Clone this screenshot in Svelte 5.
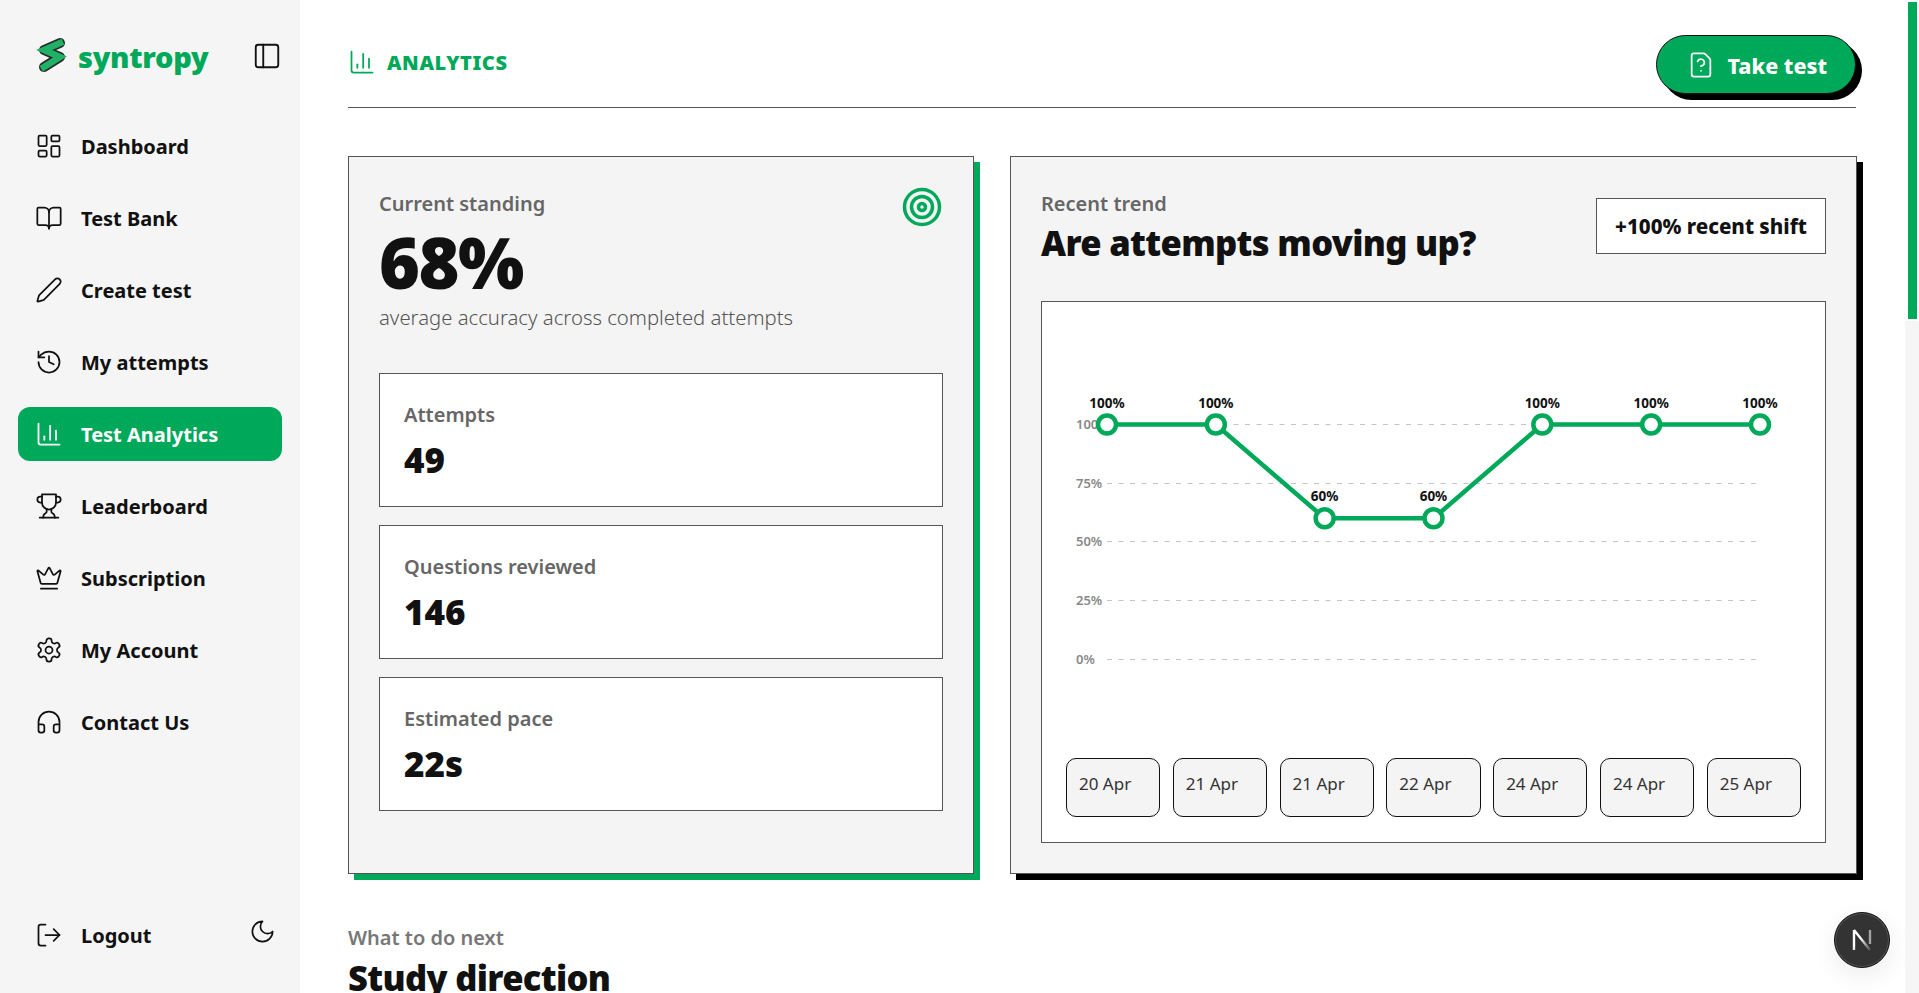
<script>
    const nav = [
        { label: 'Dashboard', icon: 'dashboard' },
        { label: 'Test Bank', icon: 'book' },
        { label: 'Create test', icon: 'pen' },
        { label: 'My attempts', icon: 'history' },
        { label: 'Test Analytics', icon: 'chart', active: true },
        { label: 'Leaderboard', icon: 'trophy' },
        { label: 'Subscription', icon: 'crown' },
        { label: 'My Account', icon: 'settings' },
        { label: 'Contact Us', icon: 'headphones' }
    ];

    const stats = [
        { label: 'Attempts', value: '49' },
        { label: 'Questions reviewed', value: '146' },
        { label: 'Estimated pace', value: '22s' }
    ];

    const dates = ['20 Apr', '21 Apr', '21 Apr', '22 Apr', '24 Apr', '24 Apr', '25 Apr'];
    const scores = [100, 100, 60, 60, 100, 100, 100];
    const ticks = [100, 75, 50, 25, 0];

    // chart coordinates, relative to the white chart box
    const xAt = i => 65 + i * 108.83;
    const yAt = v => 357 - v * 2.345;
    const points = scores.map((s, i) => `${xAt(i)},${yAt(s)}`).join(' ');
</script>

{#snippet icon(name, size = 28)}
    <svg class="icon" width={size} height={size} viewBox="0 0 24 24">
        {#if name === 'dashboard'}
            <rect x="3" y="3" width="7" height="9" rx="1" />
            <rect x="14" y="3" width="7" height="5" rx="1" />
            <rect x="14" y="12" width="7" height="9" rx="1" />
            <rect x="3" y="16" width="7" height="5" rx="1" />
        {:else if name === 'book'}
            <path d="M12 7v14" />
            <path d="M3 18a1 1 0 0 1-1-1V4a1 1 0 0 1 1-1h5a4 4 0 0 1 4 4 4 4 0 0 1 4-4h5a1 1 0 0 1 1 1v13a1 1 0 0 1-1 1h-6a3 3 0 0 0-3 3 3 3 0 0 0-3-3z" />
        {:else if name === 'pen'}
            <path d="M21.174 6.812a1 1 0 0 0-3.986-3.987L3.842 16.174a2 2 0 0 0-.5.83l-1.321 4.352a.5.5 0 0 0 .623.622l4.353-1.32a2 2 0 0 0 .83-.497z" />
        {:else if name === 'history'}
            <path d="M3 12a9 9 0 1 0 9-9 9.75 9.75 0 0 0-6.74 2.74L3 8" />
            <path d="M3 3v5h5" />
            <path d="M12 7v5l4 2" />
        {:else if name === 'chart'}
            <path d="M3 3v16a2 2 0 0 0 2 2h16" />
            <path d="M18 17V9" />
            <path d="M13 17V5" />
            <path d="M8 17v-3" />
        {:else if name === 'trophy'}
            <path d="M6 9H4.5a2.5 2.5 0 0 1 0-5H6" />
            <path d="M18 9h1.5a2.5 2.5 0 0 0 0-5H18" />
            <path d="M4 22h16" />
            <path d="M10 14.66V17c0 .55-.47.98-.97 1.21C7.85 18.75 7 20.24 7 22" />
            <path d="M14 14.66V17c0 .55.47.98.97 1.21C16.15 18.75 17 20.24 17 22" />
            <path d="M18 2H6v7a6 6 0 0 0 12 0V2Z" />
        {:else if name === 'crown'}
            <path d="M11.562 3.266a.5.5 0 0 1 .876 0L15.39 8.87a1 1 0 0 0 1.516.294L21.183 5.5a.5.5 0 0 1 .798.519l-2.834 10.246a1 1 0 0 1-.956.734H5.81a1 1 0 0 1-.957-.734L2.02 6.02a.5.5 0 0 1 .798-.519l4.276 3.664a1 1 0 0 0 1.516-.294z" />
            <path d="M5 21h14" />
        {:else if name === 'settings'}
            <path d="M12.22 2h-.44a2 2 0 0 0-2 2v.18a2 2 0 0 1-1 1.73l-.43.25a2 2 0 0 1-2 0l-.15-.08a2 2 0 0 0-2.73.73l-.22.38a2 2 0 0 0 .73 2.73l.15.1a2 2 0 0 1 1 1.72v.51a2 2 0 0 1-1 1.74l-.15.09a2 2 0 0 0-.73 2.73l.22.38a2 2 0 0 0 2.73.73l.15-.08a2 2 0 0 1 2 0l.43.25a2 2 0 0 1 1 1.73V20a2 2 0 0 0 2 2h.44a2 2 0 0 0 2-2v-.18a2 2 0 0 1 1-1.73l.43-.25a2 2 0 0 1 2 0l.15.08a2 2 0 0 0 2.73-.73l.22-.39a2 2 0 0 0-.73-2.73l-.15-.08a2 2 0 0 1-1-1.74v-.5a2 2 0 0 1 1-1.74l.15-.09a2 2 0 0 0 .73-2.73l-.22-.38a2 2 0 0 0-2.73-.73l-.15.08a2 2 0 0 1-2 0l-.43-.25a2 2 0 0 1-1-1.73V4a2 2 0 0 0-2-2z" />
            <circle cx="12" cy="12" r="3" />
        {:else if name === 'headphones'}
            <path d="M3 14h3a2 2 0 0 1 2 2v3a2 2 0 0 1-2 2H5a2 2 0 0 1-2-2v-7a9 9 0 0 1 18 0v7a2 2 0 0 1-2 2h-1a2 2 0 0 1-2-2v-3a2 2 0 0 1 2-2h3" />
        {:else if name === 'logout'}
            <path d="M9 21H5a2 2 0 0 1-2-2V5a2 2 0 0 1 2-2h4" />
            <path d="m16 17 5-5-5-5" />
            <path d="M21 12H9" />
        {:else if name === 'moon'}
            <path d="M12 3a6 6 0 0 0 9 9 9 9 0 1 1-9-9Z" />
        {:else if name === 'panel'}
            <rect x="3" y="3" width="18" height="18" rx="2" />
            <path d="M9 3v18" />
        {:else if name === 'file'}
            <path d="M6 22a2 2 0 0 1-2-2V4a2 2 0 0 1 2-2h8a2.4 2.4 0 0 1 1.704.706l3.588 3.588A2.4 2.4 0 0 1 20 8v12a2 2 0 0 1-2 2z" />
            <path d="M12 17h.01" />
            <path d="M9.1 9a3 3 0 0 1 5.82 1c0 2-3 3-3 3" />
        {:else if name === 'target'}
            <circle cx="12" cy="12" r="10" />
            <circle cx="12" cy="12" r="6" />
            <circle cx="12" cy="12" r="2" />
        {/if}
    </svg>
{/snippet}

<div class="page">
    <aside class="sidebar">
        <div class="brand">
            <svg class="logo" width="36" height="40" viewBox="0 0 36 40">
                <polyline class="logo-edge" points="24,7 8,14 24,21 8,31" />
                <polyline class="logo-fill" points="24,7 8,14 24,21 8,31" />
            </svg>
            <span class="brand-name">syntropy</span>
            <span class="panel-toggle">{@render icon('panel', 30)}</span>
        </div>

        <nav>
            {#each nav as item}
                <a class="nav-item" class:active={item.active}>
                    {@render icon(item.icon)}
                    <span>{item.label}</span>
                </a>
            {/each}
        </nav>

        <div class="side-foot">
            <a class="nav-item">
                {@render icon('logout')}
                <span>Logout</span>
            </a>
            <span class="moon">{@render icon('moon', 27)}</span>
        </div>
    </aside>

    <main>
        <header>
            <div class="crumb">
                {@render icon('chart')}
                <span>ANALYTICS</span>
            </div>
            <button class="take-test">
                {@render icon('file')}
                <span>Take test</span>
            </button>
        </header>

        <section class="cards">
            <article class="card standing">
                <p class="eyebrow">Current standing</p>
                <span class="target">{@render icon('target', 42)}</span>
                <div class="big">68%</div>
                <p class="sub">average accuracy across completed attempts</p>
                <div class="stats">
                    {#each stats as stat}
                        <div class="stat">
                            <p class="eyebrow">{stat.label}</p>
                            <div class="value">{stat.value}</div>
                        </div>
                    {/each}
                </div>
            </article>

            <article class="card trend">
                <div class="trend-head">
                    <div>
                        <p class="eyebrow">Recent trend</p>
                        <h2>Are attempts moving up?</h2>
                    </div>
                    <div class="shift">+100% recent shift</div>
                </div>

                <div class="chart">
                    <svg width="783" height="456" viewBox="0 0 783 456">
                        {#each ticks as t}
                            <line class="grid" x1="65" x2="714" y1={Math.floor(yAt(t)) + 0.5} y2={Math.floor(yAt(t)) + 0.5} />
                            <text class="tick" x="34" y={yAt(t) + 4.5}>{t}%</text>
                        {/each}
                        <polyline class="trend-line" {points} />
                        {#each scores as s, i}
                            <circle class="dot" cx={xAt(i)} cy={yAt(s)} r="9" />
                            <text class="score" x={xAt(i)} y={yAt(s) - 17}>{s}%</text>
                        {/each}
                    </svg>
                    <div class="dates">
                        {#each dates as d}
                            <div class="date">{d}</div>
                        {/each}
                    </div>
                </div>
            </article>
        </section>

        <section class="next">
            <p class="eyebrow">What to do next</p>
            <h2>Study direction</h2>
        </section>
    </main>

    <div class="scroll-track"><div class="scroll-thumb"></div></div>

    <div class="dev-badge">
        <svg width="28" height="28" viewBox="0 0 28 28">
            <defs>
                <linearGradient id="nfade" x1="0" y1="0" x2="1" y2="1">
                    <stop offset="0.4" stop-color="#fff" />
                    <stop offset="1" stop-color="#fff" stop-opacity="0.15" />
                </linearGradient>
            </defs>
            <path d="M6 4v20M6 4l16 20" fill="none" stroke="url(#nfade)" stroke-width="2.4" />
            <path d="M22 4v14" fill="none" stroke="#fff" stroke-opacity="0.55" stroke-width="2.4" />
        </svg>
    </div>
</div>

<style>
    :global(body) {
        background: #fff;
        overflow: hidden;
    }

    .page {
        display: flex;
        height: 993px;
        overflow: hidden;
        font-family: "Noto Sans", "Open Sans", sans-serif;
        color: #111;
    }

    p, h2 { margin: 0; }

    .icon {
        fill: none;
        stroke: currentColor;
        stroke-width: 1.5;
        stroke-linecap: round;
        stroke-linejoin: round;
        flex: none;
        display: block;
    }

    /* sidebar */
    .sidebar {
        width: 300px;
        flex: none;
        background: #f5f5f5;
        padding: 0 18px;
        box-sizing: border-box;
        display: flex;
        flex-direction: column;
    }

    .brand {
        display: flex;
        align-items: center;
        height: 112px;
        margin-bottom: 7px;
        padding-left: 18px;
    }

    .logo-edge, .logo-fill {
        fill: none;
    }
    .logo-edge { stroke: #2a2a2a; stroke-width: 10; stroke-linecap: round; stroke-linejoin: round; }
    .logo-fill { stroke: #1fb165; stroke-width: 6.5; stroke-linecap: square; stroke-linejoin: miter; }

    .brand-name {
        font-size: 29px;
        font-weight: 900;
        color: #00a859;
        margin-left: 6px;
        letter-spacing: -0.3px;
    }

    .panel-toggle {
        margin-left: auto;
    }

    nav {
        display: flex;
        flex-direction: column;
        gap: 18px;
    }

    .nav-item {
        display: flex;
        align-items: center;
        gap: 18.5px;
        height: 54px;
        padding-left: 16.5px;
        border-radius: 12px;
        font-size: 20px;
        font-weight: 700;
        color: #111;
    }

    .nav-item span { margin-top: 1px; }

    .nav-item.active {
        background: #00a859;
        color: #fff;
    }

    .side-foot {
        margin-top: auto;
        margin-bottom: 31px;
        display: flex;
        align-items: center;
        justify-content: space-between;
    }

    .moon { margin-right: 6px; margin-top: -7px; }

    /* main column */
    main {
        flex: 1;
        padding: 35px 63px 0 48px;
        min-width: 0;
    }

    header {
        display: flex;
        align-items: flex-start;
        justify-content: space-between;
        height: 72px;
        border-bottom: 1px solid #555;
    }

    .crumb {
        display: flex;
        align-items: center;
        gap: 11px;
        color: #00a859;
        font-size: 20px;
        font-weight: 900;
        letter-spacing: 0.6px;
        margin-top: 13px;
    }

    .take-test {
        display: flex;
        align-items: center;
        gap: 13px;
        height: 59px;
        padding: 0 28px 0 30px;
        border: 1px solid #111;
        border-radius: 30px;
        background: #00a859;
        color: #fff;
        font: 800 21.5px "Noto Sans", sans-serif;
        box-shadow: 6px 6px 0 #000;
    }

    .take-test span { margin-top: 2px; }

    .cards {
        display: grid;
        grid-template-columns: 626px 1fr;
        gap: 36px;
        margin-top: 48px;
    }

    .card {
        position: relative;
        height: 718px;
        box-sizing: border-box;
        background: #f4f4f4;
        border: 1px solid #555;
        padding: 32px 30px;
    }

    .standing { box-shadow: 6px 6px 0 #00a859; }
    .trend { box-shadow: 6px 6px 0 #000; }

    .eyebrow {
        font-size: 20px;
        font-weight: 600;
        line-height: 30px;
        color: #666;
    }

    .target {
        position: absolute;
        top: 29px;
        right: 30px;
        color: #00a859;
    }

    .target :global(svg) { stroke-width: 2; }

    .big {
        font-size: 70px;
        font-weight: 900;
        line-height: 81px;
        margin-top: 3px;
        letter-spacing: -1.5px;
    }

    .sub {
        font-size: 20.3px;
        font-weight: 300;
        line-height: 28px;
        color: #555;
    }

    .stats {
        display: flex;
        flex-direction: column;
        gap: 18px;
        margin-top: 42px;
    }

    .stat {
        height: 134px;
        box-sizing: border-box;
        padding: 26px 24px;
        background: #fff;
        border: 1px solid #555;
    }

    .value {
        font-size: 35px;
        font-weight: 900;
        line-height: 50px;
        margin-top: 5px;
    }

    .trend-head {
        display: flex;
        align-items: flex-start;
        justify-content: space-between;
        height: 112px;
    }

    h2 {
        font-size: 34.5px;
        font-weight: 900;
        line-height: 48px;
        letter-spacing: -0.65px;
    }

    .shift {
        margin-top: 9px;
        height: 56px;
        box-sizing: border-box;
        display: flex;
        align-items: center;
        padding: 0 18px;
        background: #fff;
        border: 1px solid #555;
        font-size: 20.5px;
        font-weight: 800;
    }

    .chart {
        background: #fff;
        border: 1px solid #555;
        height: 542px;
        box-sizing: border-box;
        display: flex;
        flex-direction: column;
    }

    .chart svg { display: block; }

    .grid {
        stroke: #c4c4c4;
        stroke-width: 1;
        stroke-dasharray: 5 6.5;
    }

    .tick {
        font-size: 13px;
        font-weight: 600;
        fill: #888;
    }

    .trend-line {
        fill: none;
        stroke: #00a859;
        stroke-width: 4.5;
    }

    .dot {
        fill: #fff;
        stroke: #00a859;
        stroke-width: 4.5;
    }

    .score {
        font-size: 13.5px;
        font-weight: 700;
        fill: #111;
        text-anchor: middle;
    }

    .dates {
        display: grid;
        grid-template-columns: repeat(7, 1fr);
        gap: 12.5px;
        padding: 0 24px;
    }

    .date {
        height: 59px;
        box-sizing: border-box;
        padding: 12px 12px;
        background: #f4f4f4;
        border: 1px solid #111;
        border-radius: 10px;
        font-size: 17px;
        line-height: 26px;
        color: #333;
    }

    .next { margin-top: 49px; }
    .next .eyebrow { color: #777; }
    .next h2 { margin-top: 1px; }

    /* overlays */
    .scroll-track {
        position: absolute;
        top: 0;
        right: 0;
        width: 14px;
        height: 993px;
        background: #f6f6f6;
    }

    .scroll-thumb {
        box-sizing: border-box;
        width: 14px;
        height: 321px;
        background: #00a859;
        border: solid #fff;
        border-width: 2px 2px 2px 3px;
    }

    .dev-badge {
        position: absolute;
        left: 1834px;
        top: 912px;
        width: 56px;
        height: 56px;
        box-sizing: border-box;
        border-radius: 50%;
        display: flex;
        align-items: center;
        justify-content: center;
        background: #333;
        border: 1px solid #111;
        box-shadow: 0 0 0 1px #555 inset, 0 8px 24px rgba(0, 0, 0, 0.08);
    }
</style>
